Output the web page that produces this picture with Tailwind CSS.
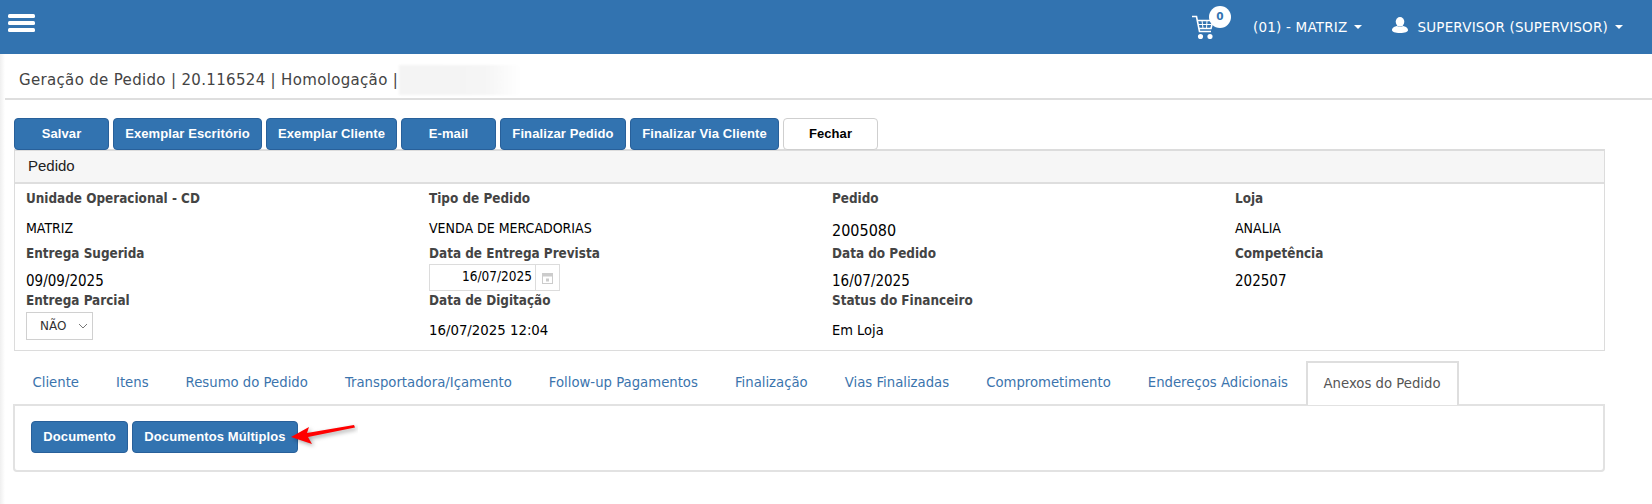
<!DOCTYPE html>
<html lang="pt">
<head>
<meta charset="utf-8">
<script src="https://cdn.jsdelivr.net/npm/@tailwindcss/browser@4"></script>
</head>
<body class="bg-white overflow-hidden">
<div class="w-[1652px] h-[504px] relative font-['DejaVu_Sans',sans-serif] text-[#333]">
  <header class="h-[54px] bg-[#3273b0] flex items-center text-white text-[13.5px]">
    <svg class="ml-[8px] mb-[9px]" width="27" height="18" viewBox="0 0 27 18"><g fill="#fff"><rect y="0" width="27" height="4" rx="1.500"/><rect y="7" width="27" height="4" rx="1.500"/><rect y="14" width="27" height="4" rx="1.500"/></g></svg>
    <div class="ml-auto flex items-center">
      <div class="relative w-[39px] h-[32px] mr-[22px]">
        <svg class="absolute left-0 top-[4px]" width="23" height="24" viewBox="0 0 23 24" fill="none" stroke="#fff" stroke-width="1.6"><path d="M0 1.500h4.500l3 15h11.500"/><path d="M5.500 5.500H21l-2 8H7"/><path d="M6.500 9.500h13M10 5.500l1 8M15 5.500l-.5 8" stroke-width="1"/><circle cx="8.500" cy="21.500" r="1.800" fill="#fff"/><circle cx="18" cy="21.500" r="1.800" fill="#fff"/></svg>
        <span class="absolute left-[17px] top-[-5px] w-[22px] h-[22px] rounded-full bg-white text-[#3273b0] text-[10.5px] font-bold flex items-center justify-center leading-none pb-[2px]">0</span>
      </div>
      <span class="tracking-[0.2px]">(01) - MATRIZ</span>
      <span class="ml-[7px] mr-[30px] w-0 h-0 border-x-[4px] border-x-transparent border-t-[4px] border-t-white"></span>
      <svg class="mr-[9px] mb-[4px]" width="16" height="16" viewBox="0 0 16 16" fill="#fff"><ellipse cx="8" cy="4.800" rx="4.300" ry="4.800"/><path d="M0 13c0-2.500 3-3.500 4.800-4 1.500 1 4.900 1 6.400 0 1.800.5 4.800 1.500 4.800 4 0 2-3 3-8 3s-8-1-8-3z"/></svg>
      <span class="tracking-[0.2px]">SUPERVISOR (SUPERVISOR)</span>
      <span class="ml-[7px] mr-[29px] w-0 h-0 border-x-[4px] border-x-transparent border-t-[4px] border-t-white"></span>
    </div>
  </header>

  <div class="absolute left-0 top-[54px] bottom-0 w-[5px] bg-gradient-to-r from-[#efefef] to-white"></div>

  <div class="h-[46px] border-b-2 border-[#dedede] flex items-center pl-[19px] pt-[8px] text-[15px] tracking-[0.33px] text-[#444]">
    <span class="whitespace-pre">Geração de Pedido | 20.116524 | Homologação |</span>
    <div class="ml-[1px] w-[122px] h-[30px] bg-gradient-to-r from-[#f4f4f4] via-[#f5f5f5] via-70% to-white blur-[1px]"></div>
  </div>

  <div class="pl-[14px] w-[1605px]">
    <div class="flex gap-[4px] mt-[18px] font-['Liberation_Sans',sans-serif] font-bold text-[13px] tracking-[0.1px] text-white h-[32px]">
      <button class="w-[95px] rounded-[4px] bg-[#3273b0] border border-[#28609a]">Salvar</button>
      <button class="w-[149px] rounded-[4px] bg-[#3273b0] border border-[#28609a]">Exemplar Escritório</button>
      <button class="w-[131px] rounded-[4px] bg-[#3273b0] border border-[#28609a]">Exemplar Cliente</button>
      <button class="w-[95px] rounded-[4px] bg-[#3273b0] border border-[#28609a]">E-mail</button>
      <button class="w-[126px] rounded-[4px] bg-[#3273b0] border border-[#28609a]">Finalizar Pedido</button>
      <button class="w-[149px] rounded-[4px] bg-[#3273b0] border border-[#28609a]">Finalizar Via Cliente</button>
      <button class="w-[95px] rounded-[4px] bg-white border border-[#cfcfcf] text-black">Fechar</button>
    </div>

    <section class="border border-[#dcdcdc] border-t-2 h-[202px] -mt-[1px]">
      <div class="h-[33px] bg-[#f6f6f6] border-b-2 border-[#dedede] pl-[13px] flex items-center text-[15px] text-[#222] font-['Liberation_Sans',sans-serif]">Pedido</div>
      <div class="grid grid-cols-[repeat(4,403px)] pl-[11px] text-[13.4px] font-['DejaVu_Sans_Condensed','DejaVu_Sans',sans-serif]">
        <div class="h-[61px] pt-[6px] flex flex-col">
          <span class="font-bold text-[#444] leading-[18px]">Unidade Operacional - CD</span>
          <span class="mt-[12px] text-black leading-[16px] text-[14px]">MATRIZ</span>
        </div>
        <div class="h-[61px] pt-[6px] flex flex-col">
          <span class="font-bold text-[#444] leading-[18px]">Tipo de Pedido</span>
          <span class="mt-[12px] text-black leading-[16px] text-[14px]">VENDA DE MERCADORIAS</span>
        </div>
        <div class="h-[61px] pt-[6px] flex flex-col">
          <span class="font-bold text-[#444] leading-[18px]">Pedido</span>
          <span class="mt-[13px] text-black text-[16px] leading-[20px]">2005080</span>
        </div>
        <div class="h-[61px] pt-[6px] flex flex-col">
          <span class="font-bold text-[#444] leading-[18px]">Loja</span>
          <span class="mt-[12px] text-black leading-[16px] text-[14px]">ANALIA</span>
        </div>

        <div class="h-[47px] flex flex-col">
          <span class="font-bold text-[#444] leading-[18px]">Entrega Sugerida</span>
          <span class="mt-[10px] text-black leading-[16px] text-[15px]">09/09/2025</span>
        </div>
        <div class="h-[47px] flex flex-col">
          <span class="font-bold text-[#444] leading-[18px]">Data de Entrega Prevista</span>
          <div class="mt-[1px] flex w-[131px] h-[27px] border border-[#dcdcdc] text-black">
            <span class="w-[105px] text-right pr-[3px] leading-[23px] text-[13.5px]">16/07/2025</span>
            <span class="flex-1 border-l border-[#dcdcdc] flex items-center justify-center"><svg width="11" height="12" viewBox="0 0 11 12"><rect x=".5" y="1.500" width="10" height="10" fill="none" stroke="#ccc"/><rect x=".5" y="1.500" width="10" height="3" fill="#ccc"/><rect x="4" y="6.500" width="3" height="3" fill="#ccc"/></svg></span>
          </div>
        </div>
        <div class="h-[47px] flex flex-col">
          <span class="font-bold text-[#444] leading-[18px]">Data do Pedido</span>
          <span class="mt-[10px] text-black leading-[16px] text-[15px]">16/07/2025</span>
        </div>
        <div class="h-[47px] flex flex-col">
          <span class="font-bold text-[#444] leading-[18px]">Competência</span>
          <span class="mt-[10px] text-black leading-[16px] text-[15px]">202507</span>
        </div>

        <div class="flex flex-col">
          <span class="font-bold text-[#444] leading-[18px]">Entrega Parcial</span>
          <div class="mt-[2px] w-[67px] h-[28px] border border-[#d0d0d0] flex items-center pl-[13px] font-['DejaVu_Sans',sans-serif] text-[12px] text-[#333]">NÃO<svg class="ml-[12px]" width="10" height="6" viewBox="0 0 10 6" fill="none" stroke="#777" stroke-width="1"><path d="M1 1l4 4 4-4"/></svg></div>
        </div>
        <div class="flex flex-col">
          <span class="font-bold text-[#444] leading-[18px]">Data de Digitação</span>
          <span class="mt-[12px] text-black leading-[16px] text-[14.8px]">16/07/2025 12:04</span>
        </div>
        <div class="flex flex-col">
          <span class="font-bold text-[#444] leading-[18px]">Status do Financeiro</span>
          <span class="mt-[12px] text-black leading-[16px] text-[14.5px]">Em Loja</span>
        </div>
        <div></div>
      </div>
    </section>

    <nav class="mt-[10px] h-[43px] flex text-[13.25px] text-[#3b74ad] relative z-10">
      <a class="px-[18.5px] pt-[1px] flex items-center">Cliente</a>
      <a class="px-[18.5px] pt-[1px] flex items-center">Itens</a>
      <a class="px-[18.5px] pt-[1px] flex items-center">Resumo do Pedido</a>
      <a class="px-[18.5px] pt-[1px] flex items-center">Transportadora/Içamento</a>
      <a class="px-[18.5px] pt-[1px] flex items-center">Follow-up Pagamentos</a>
      <a class="px-[18.5px] pt-[1px] flex items-center">Finalização</a>
      <a class="px-[18.5px] pt-[1px] flex items-center">Vias Finalizadas</a>
      <a class="px-[18.5px] pt-[1px] flex items-center">Comprometimento</a>
      <a class="px-[18.5px] pt-[1px] flex items-center">Endereços Adicionais</a>
      <a class="px-[16px] flex items-center -ml-[1px] h-[44px] bg-white border-2 border-[#dedede] border-b-0 text-[#555]">Anexos do Pedido</a>
    </nav>
    <div class="h-[68px] -ml-[1px] border-2 border-[#e2e2e2] rounded-b-[4px] pl-[16px] pt-[15px] flex gap-[4px] font-['Liberation_Sans',sans-serif] font-bold text-[13px] tracking-[0.1px] text-white">
      <button class="w-[97px] h-[32px] rounded-[4px] bg-[#3273b0] border border-[#28609a]">Documento</button>
      <button class="w-[166px] h-[32px] rounded-[4px] bg-[#3273b0] border border-[#28609a]">Documentos Múltiplos</button>
    </div>
  </div>

  <svg class="absolute left-[288px] top-[420px]" width="70" height="30" viewBox="0 0 70 30">
    <path d="M3 17 L21 7 L19 13 L66 5 L67 7.500 L20 17 L24 24 Z" fill="#f00" style="filter:drop-shadow(2px 2px 2px rgba(0,0,0,.35))"/>
  </svg>
</div>
</body>
</html>
